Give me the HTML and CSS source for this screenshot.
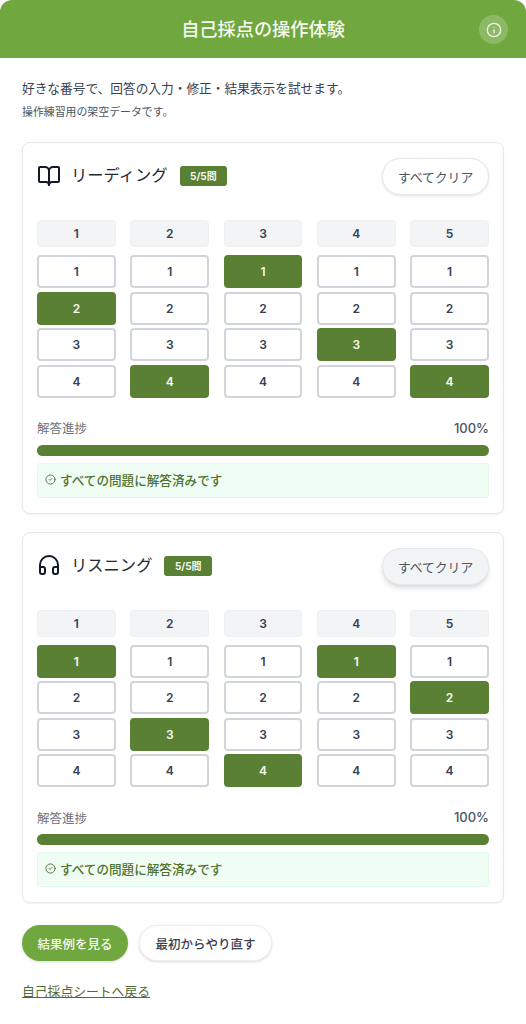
FILE: index.html
```html
<!DOCTYPE html>
<html lang="ja">
<head>
<meta charset="utf-8">
<title>自己採点の操作体験</title>
<link rel="stylesheet" href="styles.css">
</head>
<body>
<div class="page">
  <header class="top">
    <h1>自己採点の操作体験</h1>
    <span class="info">
      <svg viewBox="0 0 24 24" width="18" height="18" fill="none" stroke="currentColor" stroke-width="2" stroke-linecap="round"><circle cx="12" cy="12" r="10"/><path d="M12 16v-4M12 8h.01"/></svg>
    </span>
  </header>
  <main class="main">
    <p class="lead">好きな番号で、回答の入力・修正・結果表示を試せます。</p>
    <p class="note">操作練習用の架空データです。</p>

    <section class="card">
      <div class="card-head">
        <svg class="card-icon" viewBox="0 0 24 24" width="24" height="24" fill="none" stroke="currentColor" stroke-width="2" stroke-linecap="round" stroke-linejoin="round"><path d="M12 7v14"/><path d="M3 18a1 1 0 0 1-1-1V4a1 1 0 0 1 1-1h5a4 4 0 0 1 4 4 4 4 0 0 1 4-4h5a1 1 0 0 1 1 1v13a1 1 0 0 1-1 1h-6a3 3 0 0 0-3 3 3 3 0 0 0-3-3z"/></svg>
        <h2>リーディング</h2>
        <span class="badge">5/5問</span>
        <button class="clear">すべてクリア</button>
      </div>
      <div class="grid">
        <div class="col"><div class="qnum">1</div><div class="opt">1</div><div class="opt on">2</div><div class="opt">3</div><div class="opt">4</div></div>
        <div class="col"><div class="qnum">2</div><div class="opt">1</div><div class="opt">2</div><div class="opt">3</div><div class="opt on">4</div></div>
        <div class="col"><div class="qnum">3</div><div class="opt on">1</div><div class="opt">2</div><div class="opt">3</div><div class="opt">4</div></div>
        <div class="col"><div class="qnum">4</div><div class="opt">1</div><div class="opt">2</div><div class="opt on">3</div><div class="opt">4</div></div>
        <div class="col"><div class="qnum">5</div><div class="opt">1</div><div class="opt">2</div><div class="opt">3</div><div class="opt on">4</div></div>
      </div>
      <div class="progress-row"><span class="plabel">解答進捗</span><span class="pval">100%</span></div>
      <div class="bar"><div class="fill"></div></div>
      <div class="done">
        <svg viewBox="0 0 24 24" width="11" height="11" fill="none" stroke="currentColor" stroke-width="2" stroke-linecap="round" stroke-linejoin="round"><circle cx="12" cy="12" r="10"/><path d="m9 12 2 2 4-4"/></svg>
        <span>すべての問題に解答済みです</span>
      </div>
    </section>

    <section class="card">
      <div class="card-head">
        <svg class="card-icon" viewBox="0 0 24 24" width="24" height="24" fill="none" stroke="currentColor" stroke-width="2" stroke-linecap="round" stroke-linejoin="round"><path d="M3 14h3a2 2 0 0 1 2 2v3a2 2 0 0 1-2 2H5a2 2 0 0 1-2-2v-7a9 9 0 0 1 18 0v7a2 2 0 0 1-2 2h-1a2 2 0 0 1-2-2v-3a2 2 0 0 1 2-2h3"/></svg>
        <h2>リスニング</h2>
        <span class="badge">5/5問</span>
        <button class="clear hover">すべてクリア</button>
      </div>
      <div class="grid">
        <div class="col"><div class="qnum">1</div><div class="opt on">1</div><div class="opt">2</div><div class="opt">3</div><div class="opt">4</div></div>
        <div class="col"><div class="qnum">2</div><div class="opt">1</div><div class="opt">2</div><div class="opt on">3</div><div class="opt">4</div></div>
        <div class="col"><div class="qnum">3</div><div class="opt">1</div><div class="opt">2</div><div class="opt">3</div><div class="opt on">4</div></div>
        <div class="col"><div class="qnum">4</div><div class="opt on">1</div><div class="opt">2</div><div class="opt">3</div><div class="opt">4</div></div>
        <div class="col"><div class="qnum">5</div><div class="opt">1</div><div class="opt on">2</div><div class="opt">3</div><div class="opt">4</div></div>
      </div>
      <div class="progress-row"><span class="plabel">解答進捗</span><span class="pval">100%</span></div>
      <div class="bar"><div class="fill"></div></div>
      <div class="done">
        <svg viewBox="0 0 24 24" width="11" height="11" fill="none" stroke="currentColor" stroke-width="2" stroke-linecap="round" stroke-linejoin="round"><circle cx="12" cy="12" r="10"/><path d="m9 12 2 2 4-4"/></svg>
        <span>すべての問題に解答済みです</span>
      </div>
    </section>

    <div class="actions">
      <button class="primary">結果例を見る</button>
      <button class="secondary">最初からやり直す</button>
    </div>
    <a class="back" href="#">自己採点シートへ戻る</a>
  </main>
</div>
</body>
</html>
```

FILE: styles.css
```css
* { box-sizing: border-box; }
html, body { margin: 0; padding: 0; background: #fff; }
body {
  width: 526px;
  height: 1024px;
  overflow: hidden;
  font-family: Inter, "Noto Sans CJK JP", sans-serif;
  color: #1f2937;
}
.page { background: #fff; border-radius: 12px; overflow: hidden; height: 1024px; }
.top {
  height: 58px;
  background: #70a83f;
  display: flex;
  align-items: center;
  justify-content: center;
  position: relative;
  color: #fff;
}
.top h1 { margin: 0; font-size: 18.2px; font-weight: 500; line-height: 1; color: #f4f8ef; }
.info {
  position: absolute;
  right: 18px;
  top: 15px;
  width: 29px;
  height: 29px;
  border-radius: 50%;
  background: rgba(255,255,255,.2);
  color: #eef4e6;
  display: flex;
  align-items: center;
  justify-content: center;
}
.info svg { width: 16px; height: 16px; }
.main { padding: 20px 22px 0; }
.lead { margin: 0; font-size: 12.7px; line-height: 22px; font-weight: 400; color: #374151; }
.note { margin: 3px 0 0; font-size: 10.9px; line-height: 18px; color: #4b5563; }
.card {
  margin: 21px 0 0;
  border: 1px solid #e5e7eb;
  border-radius: 8px;
  padding: 15px 14px 15px;
  background: #fff;
  box-shadow: 0 1px 2px rgba(0,0,0,.06);
}
.card + .card { margin-top: 18px; }
.card-head { display: flex; align-items: center; height: 37px; }
.card-icon { width: 24px; height: 24px; margin-bottom: 2px; color: #111827; flex: none; }
.card-head h2 { margin: 0 0 2px 10px; font-size: 16.3px; font-weight: 400; line-height: 1; color: #1f2937; }
.badge {
  margin: 0 0 1px 12px;
  background: #5a8034;
  color: #f2f6ec;
  font-size: 10px;
  font-weight: 700;
  line-height: 20px;
  height: 20px;
  padding: 0 10.5px;
  border-radius: 3px;
}
.clear {
  margin-left: auto;
  height: 37px;
  width: 107px;
  padding: 0;
  border: 1px solid #e5e7eb;
  border-radius: 19px;
  background: #fff;
  color: #4b5563;
  font: 400 12.8px Inter, "Noto Sans CJK JP", sans-serif;
  box-shadow: 0 1px 3px rgba(0,0,0,.12);
}
.clear.hover { background: #f3f4f6; box-shadow: 0 4px 6px -1px rgba(0,0,0,.12), 0 2px 4px -2px rgba(0,0,0,.1); }
.grid {
  margin-top: 25px;
  display: grid;
  grid-template-columns: repeat(5, 1fr);
  column-gap: 14.5px;
}
.col { display: flex; flex-direction: column; gap: 3.5px; }
.qnum {
  height: 27px;
  margin-bottom: 4.5px;
  background: #f3f4f6;
  border: 1px solid #eef0f2;
  border-radius: 4px;
  display: flex;
  align-items: center;
  justify-content: center;
  font-size: 12px;
  font-weight: 600;
  color: #374151;
}
.opt {
  height: 33px;
  border: 2px solid #d1d5db;
  border-radius: 4px;
  background: #fff;
  display: flex;
  align-items: center;
  justify-content: center;
  font-size: 12px;
  font-weight: 600;
  color: #374151;
}
.opt.on { background: #5a8034; border-color: #5a8034; color: #f5f8f0; }
.progress-row { margin-top: 21px; display: flex; justify-content: space-between; align-items: center; height: 18px; font-size: 12.5px; }
.plabel { color: #6b7280; }
.pval { color: #4b5563; font-weight: 500; font-size: 13px; }
.bar { margin-top: 8px; height: 11px; border-radius: 6px; background: #e5e7eb; overflow: hidden; }
.fill { width: 100%; height: 100%; background: #5a8034; }
.done {
  margin-top: 7px;
  height: 35px;
  padding: 0 7px 2px;
  display: flex;
  align-items: center;
  gap: 4px;
  background: #f0fdf4;
  border: 1px solid #dcfce7;
  border-radius: 3px;
  font-size: 12.6px;
  font-weight: 500;
  color: #4f7330;
}
.done svg { flex: none; }
.actions { margin-top: 22px; display: flex; gap: 11px; }
.primary, .secondary {
  height: 36px;
  border-radius: 18px;
  font: 500 12.5px Inter, "Noto Sans CJK JP", sans-serif;
  padding: 0;
}
.primary { width: 106px; background: #70a83f; color: #f6f9f1; border: 0; box-shadow: 0 1px 3px rgba(0,0,0,.15); }
.secondary { width: 133px; background: #fff; color: #374151; border: 1px solid #eceef1; box-shadow: 0 1px 3px rgba(0,0,0,.15); }
.back {
  display: inline-block;
  margin-top: 22px;
  font-size: 12.8px;
  line-height: 18px;
  color: #4f6b35;
  text-decoration: underline;
}
```
